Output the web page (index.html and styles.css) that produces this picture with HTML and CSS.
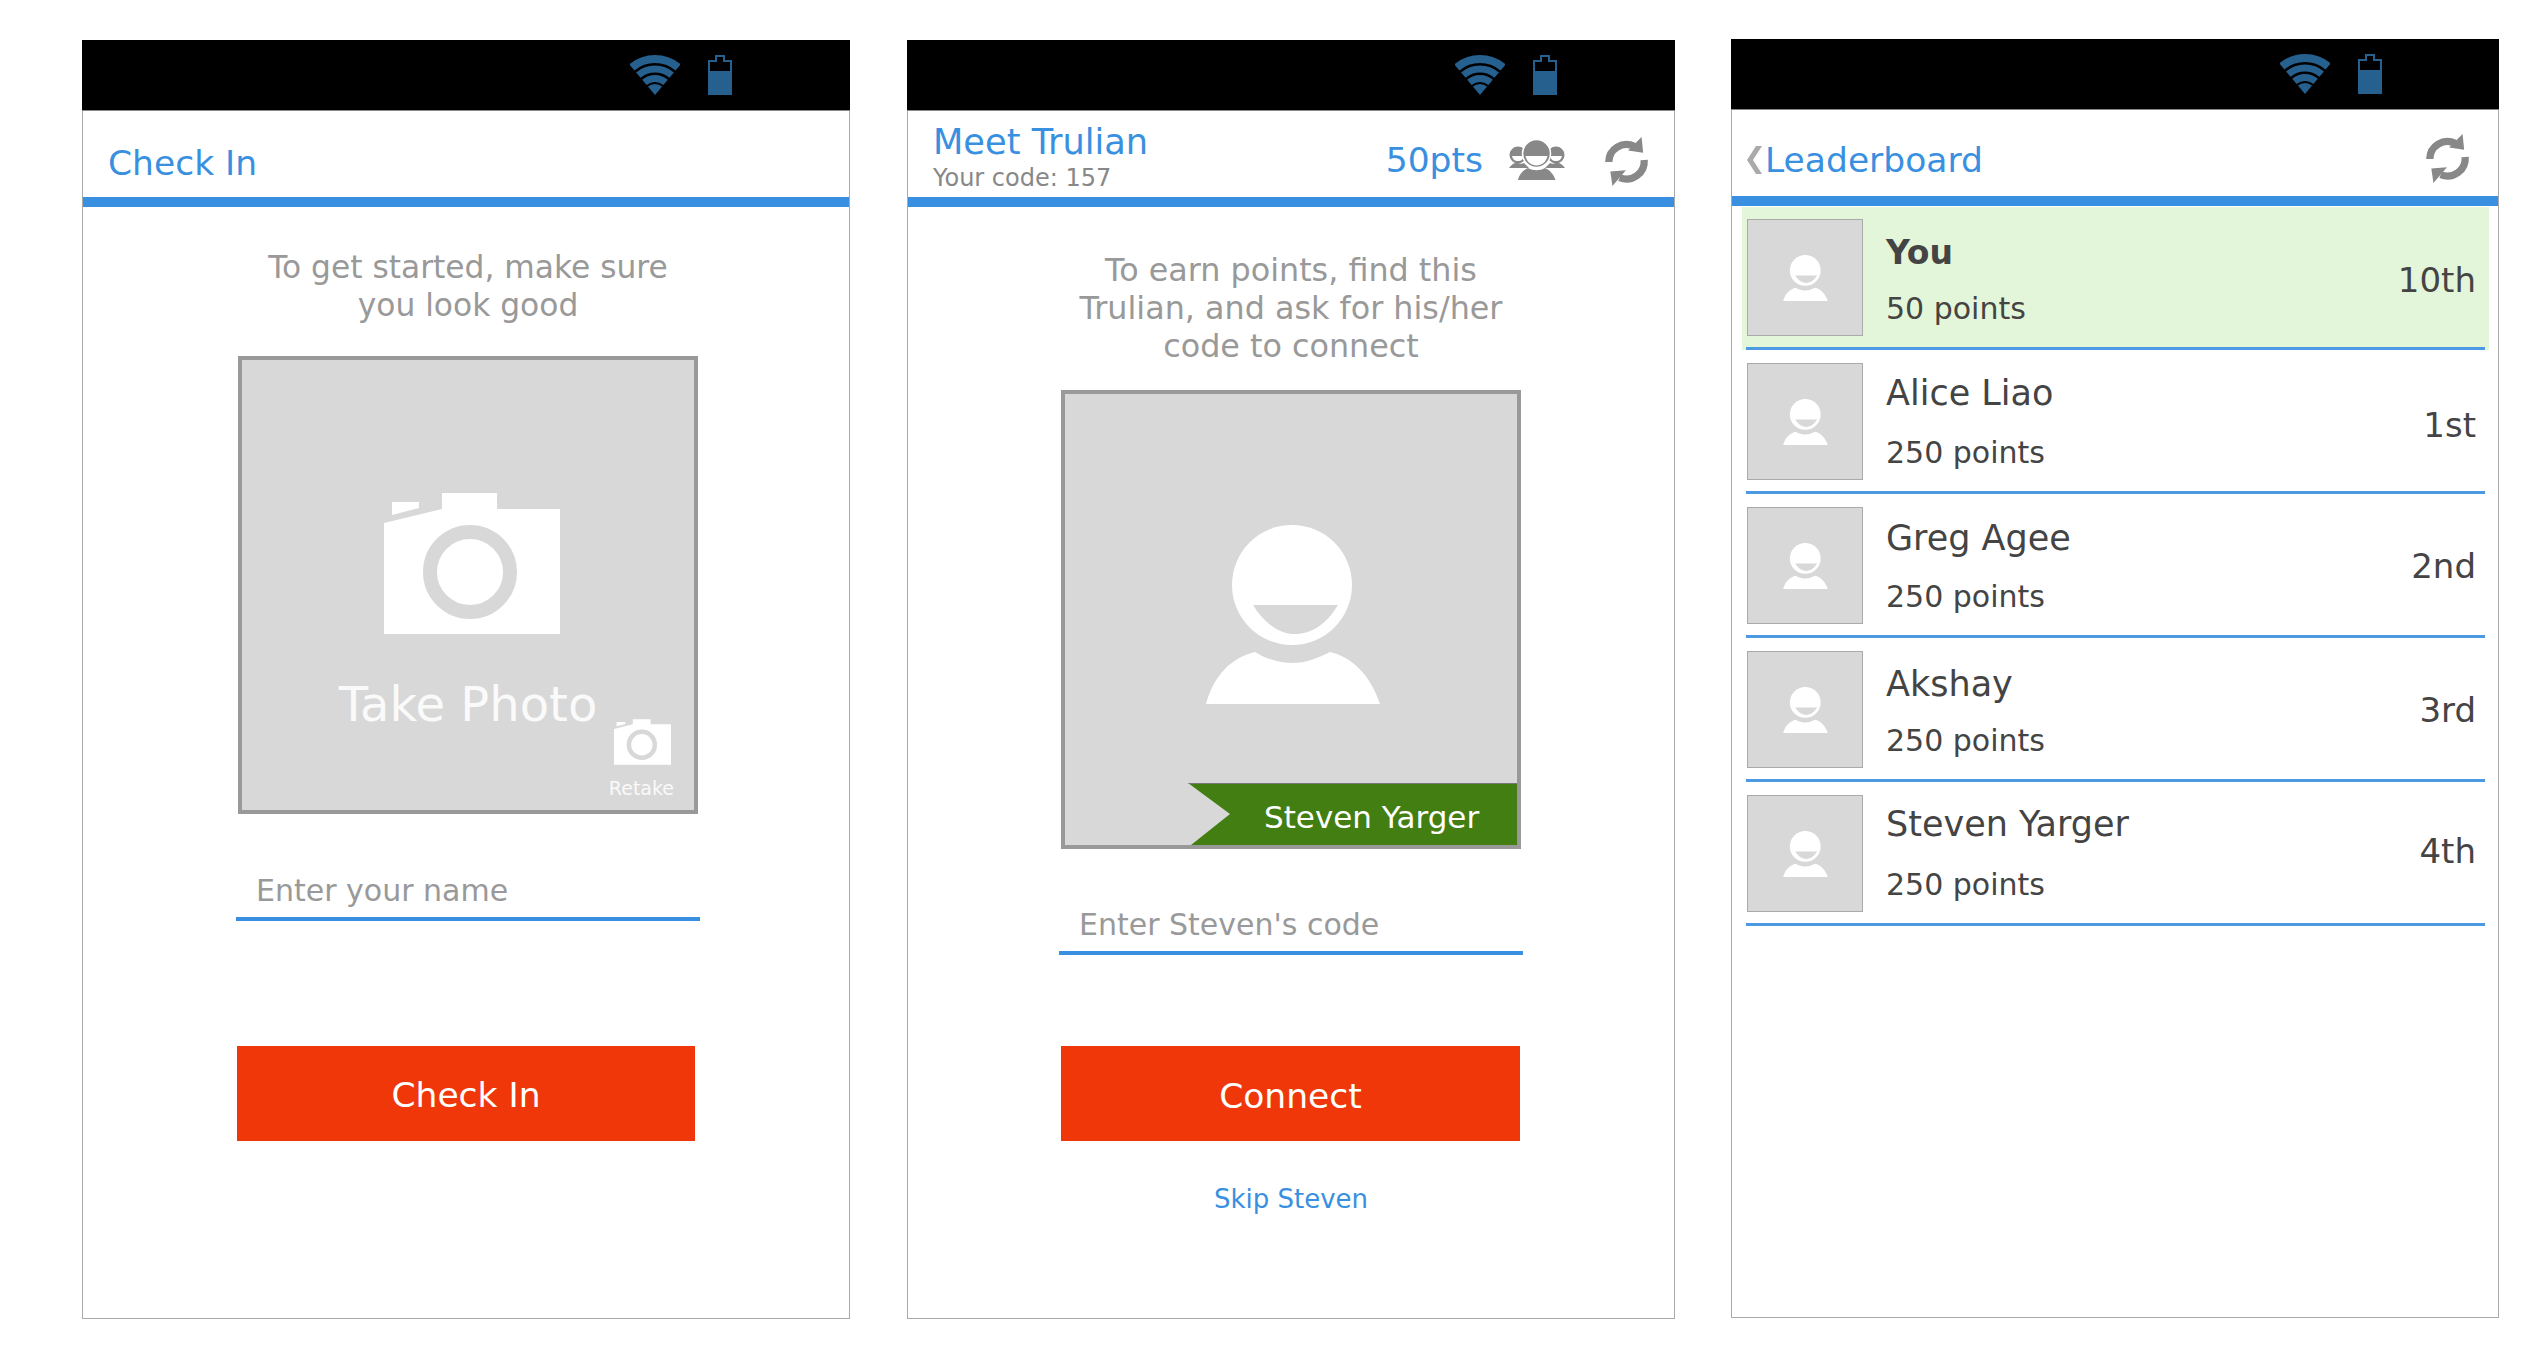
FILE: index.html
```html
<!DOCTYPE html>
<html lang="en">
<head>
    <meta charset="UTF-8">
    <meta name="viewport" content="width=device-width, initial-scale=1.0">
    <title>Trulia check in mockups</title>
    <link rel="stylesheet" href="styles.css">
</head>
<body>
    <svg class="defs" width="0" height="0">
        <symbol id="wifi" viewBox="0 0 50 40">
            <path d="M1.9 12.4A36 36 0 0 1 48.1 12.4" fill="none" stroke="#26608f" stroke-width="8"/>
            <path d="M8.3 20.1A26 26 0 0 1 41.7 20.1" fill="none" stroke="#26608f" stroke-width="7"/>
            <path d="M14.4 27.4A16.5 16.5 0 0 1 35.6 27.4" fill="none" stroke="#26608f" stroke-width="7"/>
            <path d="M25 40L17.9 31.6A11 11 0 0 1 32.1 31.6Z" fill="#26608f"/>
        </symbol>
        <symbol id="battery" viewBox="0 0 24 40">
            <path d="M7 0H17V5H24V40H0V5H7Z" fill="#26608f"/>
            <path d="M2 7H9V2H15V7H22V16H2Z" fill="#000"/>
        </symbol>
        <symbol id="camera" viewBox="0 0 176 141">
            <path d="M0 30L58 16V0H113V16H176V141H0Z" fill="#fff"/>
            <path d="M8 9H35V15L8 22Z" fill="#fff"/>
            <circle cx="86" cy="79" r="40" fill="#fff" stroke="#d8d8d8" stroke-width="14"/>
        </symbol>
        <symbol id="person" viewBox="0 0 174 179">
            <circle cx="86" cy="60" r="60" fill="#fff"/>
            <path d="M47 80H132C120 100 105 109 89 109C73 109 58 98 47 80Z" fill="#d8d8d8"/>
            <path d="M0 179C8 150 25 133 49 127C60 134 74 138 87 138C100 138 112 133 124 127C150 133 166 155 174 179Z" fill="#fff"/>
        </symbol>
        <symbol id="people" viewBox="0 0 56 40">
            <circle cx="9" cy="15" r="8.5" fill="#888"/>
            <circle cx="47" cy="15" r="8.5" fill="#888"/>
            <path d="M3 16H15C14 20 12 21 9 21C6 21 4 20 3 16ZM41 16H53C52 20 50 21 47 21C44 21 42 20 41 16Z" fill="#fff"/>
            <path d="M0 28C2 25 5 23 8 22C10 24 13 24 15 23L20 28ZM56 28C54 25 51 23 48 22C46 24 43 24 41 23L36 28Z" fill="#888"/>
            <circle cx="27.5" cy="13.5" r="14" fill="#888" stroke="#fff" stroke-width="1.5"/>
            <path d="M16.5 16H38.5C37 22 33 25.500 27.500 25.500C22 25.500 18 22 16.500 16Z" fill="#fff"/>
            <path d="M9 40C10 35 14 30 19 28C24 31 31 31 36 28C41 30 45 35 46.500 40Z" fill="#888"/>
        </symbol>
        <symbol id="refresh" viewBox="0 0 44 48">
            <path d="M4.500 24A17 17 0 0 1 29 9" fill="none" stroke="#888" stroke-width="7"/>
            <path d="M36 0L37.500 15L23 13Z" fill="#888"/>
            <path d="M38.500 22A17 17 0 0 1 15 39" fill="none" stroke="#888" stroke-width="7"/>
            <path d="M6 33L21 32L8 47Z" fill="#888"/>
        </symbol>
    </svg>

    <div class="screen check-in">
        <div class="statusbar">
            <svg class="wifi"><use href="#wifi"/></svg>
            <svg class="battery"><use href="#battery"/></svg>
        </div>
        <div class="header">
            <div class="title">Check In</div>
        </div>
        <div class="form">
            <p class="prompt">To get started, make sure<br>you look good</p>
            <div class="photo">
                <svg class="camera"><use href="#camera"/></svg>
                <div class="take-photo">Take Photo</div>
                <div class="retake">
                    <svg class="camera-small"><use href="#camera"/></svg>
                    <span>Retake</span>
                </div>
            </div>
            <div class="field">Enter your name</div>
            <div class="cta">Check In</div>
        </div>
    </div>

    <div class="screen meet">
        <div class="statusbar">
            <svg class="wifi"><use href="#wifi"/></svg>
            <svg class="battery"><use href="#battery"/></svg>
        </div>
        <div class="header">
            <div>
                <div class="title">Meet Trulian</div>
                <div class="code">Your code: 157</div>
            </div>
            <div class="points">50pts</div>
            <svg class="people"><use href="#people"/></svg>
            <svg class="refresh"><use href="#refresh"/></svg>
        </div>
        <div class="form">
            <p class="prompt">To earn points, find this<br>Trulian, and ask for his/her<br>code to connect</p>
            <div class="photo">
                <svg class="person-large"><use href="#person"/></svg>
                <div class="ribbon">Steven Yarger</div>
            </div>
            <div class="field">Enter Steven's code</div>
            <div class="cta">Connect</div>
        </div>
        <div class="skip">Skip Steven</div>
    </div>

    <div class="screen leaderboard">
        <div class="statusbar">
            <svg class="wifi"><use href="#wifi"/></svg>
            <svg class="battery"><use href="#battery"/></svg>
        </div>
        <div class="header">
            <svg class="back" viewBox="0 0 15 28"><path d="M15 0L6 14L15 28H9L0 14L9 0Z" fill="#aaa"/></svg>
            <div class="title">Leaderboard</div>
            <svg class="refresh"><use href="#refresh"/></svg>
        </div>
        <div class="rows">
            <div class="row you">
                <div class="row-inner">
                    <div class="avatar"><svg><use href="#person"/></svg></div>
                    <div class="info">
                        <div class="name">You</div>
                        <div class="score">50 points</div>
                    </div>
                    <div class="rank">10th</div>
                </div>
            </div>
            <div class="row alice">
                <div class="row-inner">
                    <div class="avatar"><svg><use href="#person"/></svg></div>
                    <div class="info">
                        <div class="name">Alice Liao</div>
                        <div class="score">250 points</div>
                    </div>
                    <div class="rank">1st</div>
                </div>
            </div>
            <div class="row greg">
                <div class="row-inner">
                    <div class="avatar"><svg><use href="#person"/></svg></div>
                    <div class="info">
                        <div class="name">Greg Agee</div>
                        <div class="score">250 points</div>
                    </div>
                    <div class="rank">2nd</div>
                </div>
            </div>
            <div class="row akshay">
                <div class="row-inner">
                    <div class="avatar"><svg><use href="#person"/></svg></div>
                    <div class="info">
                        <div class="name">Akshay</div>
                        <div class="score">250 points</div>
                    </div>
                    <div class="rank">3rd</div>
                </div>
            </div>
            <div class="row steven">
                <div class="row-inner">
                    <div class="avatar"><svg><use href="#person"/></svg></div>
                    <div class="info">
                        <div class="name">Steven Yarger</div>
                        <div class="score">250 points</div>
                    </div>
                    <div class="rank">4th</div>
                </div>
            </div>
        </div>
    </div>
</body>
</html>
```

FILE: styles.css
```css
* {
    box-sizing: border-box;
}
body {
    font-family: "DejaVu Sans", sans-serif;
    background-color: #fff;
    margin: 0;
    padding: 40px 0 0 82px;
    display: flex;
    align-items: flex-start;
    gap: 57px;
}
.defs {
    position: absolute;
}
.screen {
    width: 768px;
    height: 1279px;
    flex: none;
    border: 1px solid #aaa;
    border-top: none;
}
.leaderboard {
    margin: -1px 0 0 -1px;
}
.statusbar {
    height: 71px;
    margin: 0 -1px;
    padding-left: 548px;
    background-color: #000;
    border-bottom: 1px solid #888;
    display: flex;
    align-items: center;
    gap: 28px;
}
.leaderboard .statusbar {
    padding-left: 549px;
}
.wifi {
    width: 50px;
    height: 40px;
}
.battery {
    width: 24px;
    height: 40px;
}
.header {
    height: 96px;
    padding-left: 25px;
    border-bottom: 10px solid #3a90e0;
    display: flex;
    align-items: flex-start;
}
.title {
    font-size: 34.5px;
    line-height: 40px;
    color: #3a90e0;
}
.check-in .header .title {
    margin-top: 32px;
}
.meet .header .title {
    font-size: 35.2px;
    margin-top: 11px;
}
.code {
    font-size: 24px;
    line-height: 27px;
    margin-top: 3px;
    color: #888;
}
.points {
    font-size: 34.5px;
    line-height: 40px;
    color: #3a90e0;
    margin: 29px 0 0 auto;
}
.people {
    width: 56px;
    height: 40px;
    margin: 29px 0 0 26px;
}
.refresh {
    width: 46px;
    height: 50px;
    margin: 26px 24px 0 39px;
}
.back {
    width: 15px;
    height: 28px;
    margin: 36px 3px 0 -10px;
}
.leaderboard .title {
    margin-top: 30px;
}
.leaderboard .refresh {
    margin: 24px 27px 0 auto;
}
.form {
    width: 464px;
    height: 934px;
    display: flex;
    flex-direction: column;
    text-align: center;
}
.check-in .form {
    margin-left: 153px;
}
.meet .form {
    margin-left: 151px;
}
.prompt {
    margin: 0;
    line-height: 38px;
    color: #999;
}
.check-in .prompt {
    font-size: 31.3px;
    padding-top: 41px;
}
.meet .prompt {
    font-size: 31.8px;
    padding-top: 44px;
}
.photo {
    position: relative;
    width: 460px;
    height: 458px;
    flex: none;
    margin-left: 2px;
    background-color: #d8d8d8;
    border: 4px solid #999;
    display: flex;
    flex-direction: column;
    align-items: center;
}
.check-in .photo {
    margin-top: 32px;
}
.meet .photo {
    height: 459px;
    margin-top: 25px;
}
.camera {
    width: 176px;
    height: 141px;
    flex: none;
    margin: 133px 0 0 8px;
}
.take-photo {
    font-size: 48px;
    line-height: 52px;
    color: #fafafa;
    margin-top: 44px;
}
.retake {
    position: absolute;
    right: 20px;
    bottom: 12px;
    display: flex;
    flex-direction: column;
    align-items: center;
    font-size: 19px;
    line-height: 20px;
    color: #fafafa;
}
.camera-small {
    width: 57px;
    height: 46px;
    margin: 0 0 13px 3px;
}
.person-large {
    width: 174px;
    height: 179px;
    flex: none;
    margin: 131px 0 0 4px;
}
.ribbon {
    position: absolute;
    right: 0;
    bottom: 0;
    width: 329px;
    height: 62px;
    padding: 3px 0 0 76px;
    background-color: #427e12;
    border-top: 1px solid #777;
    clip-path: polygon(0 0, 100% 0, 100% 100%, 3px 100%, 42px 31px);
    font-size: 31px;
    line-height: 60px;
    color: #fff;
    text-align: left;
}
.field {
    margin-top: 58px;
    padding: 0 0 8px 20px;
    border-bottom: 4px solid #3a90e0;
    font-size: 30px;
    line-height: 36px;
    color: #999;
    text-align: left;
}
.check-in .field {
    margin-top: 59px;
}
.cta {
    height: 95px;
    flex: none;
    margin-top: auto;
    background-color: #f0370a;
    color: #fff;
    font-size: 34.5px;
    display: flex;
    align-items: center;
    justify-content: center;
}
.check-in .cta {
    width: 458px;
    margin-left: 1px;
    padding-top: 2px;
}
.meet .cta {
    width: 459px;
    margin-left: 2px;
    padding-top: 5px;
}
.skip {
    width: 464px;
    margin: 42px 0 0 151px;
    font-size: 26px;
    line-height: 32px;
    color: #3a90e0;
    text-align: center;
}
.rows {
    padding: 1px 9px 0 10px;
}
.you {
    background-color: #e4f6d9;
}
.row-inner {
    margin: 0 4px;
    padding: 13px 9px 11px 1px;
    border-bottom: 3px solid #4c9ae4;
    display: flex;
    align-items: flex-start;
}
.you .row-inner {
    padding-top: 12px;
}
.avatar {
    width: 116px;
    height: 117px;
    flex: none;
    background-color: #d8d8d8;
    border: 1px solid #aaa;
    display: flex;
    align-items: center;
    justify-content: center;
}
.avatar svg {
    width: 45px;
    height: 46px;
}
.info {
    margin: 10px 0 0 23px;
    height: 97px;
    display: flex;
    flex-direction: column;
    justify-content: space-between;
}
.name {
    font-size: 35px;
    line-height: 41px;
    color: #444;
}
.you .name {
    font-size: 33px;
    font-weight: bold;
    margin-top: 3px;
}
.greg .name {
    margin-top: 1px;
}
.akshay .name {
    margin-top: 3px;
}
.steven .name {
    margin-top: -1px;
}
.score {
    font-size: 30px;
    line-height: 35px;
    color: #444;
}
.rank {
    font-size: 34px;
    line-height: 40px;
    color: #444;
    margin: 41px 0 0 auto;
}
.alice .rank {
    margin-top: 42px;
}
.greg .rank,
.akshay .rank {
    margin-top: 39px;
}
.steven .rank {
    margin-top: 36px;
}
```
